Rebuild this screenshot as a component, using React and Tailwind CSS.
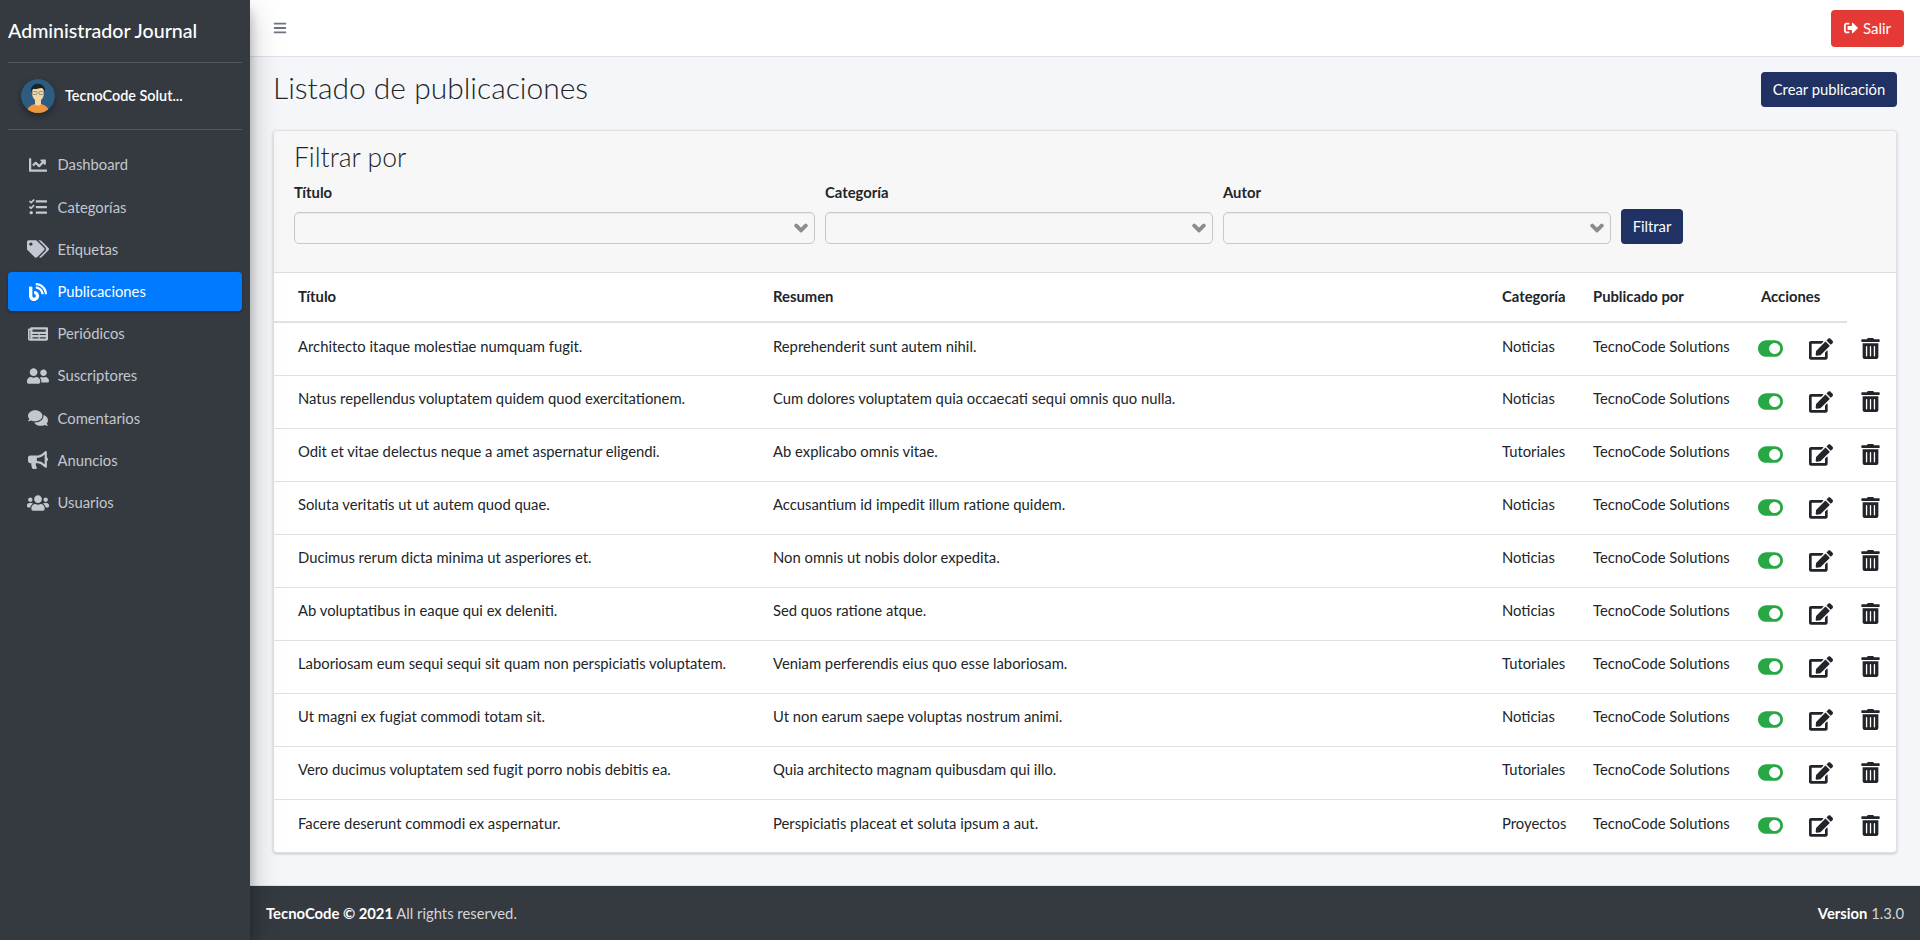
import { FaBars, FaBlog, FaBullhorn, FaChartLine, FaChevronDown, FaComments, FaEdit, FaNewspaper, FaSignOutAlt, FaTags, FaTasks, FaToggleOn, FaTrashAlt, FaUserFriends, FaUsers } from "react-icons/fa";

const menu = [
    { label: "Dashboard", icon: FaChartLine, size: "text-[18px]" },
    { label: "Categorías", icon: FaTasks, size: "text-[18px]" },
    { label: "Etiquetas", icon: FaTags, size: "text-[22px]" },
    { label: "Publicaciones", icon: FaBlog, size: "text-[18px]", active: true },
    { label: "Periódicos", icon: FaNewspaper, size: "text-[20px]" },
    { label: "Suscriptores", icon: FaUserFriends, size: "text-[22px]" },
    { label: "Comentarios", icon: FaComments, size: "text-[20px]" },
    { label: "Anuncios", icon: FaBullhorn, size: "text-[20px]" },
    { label: "Usuarios", icon: FaUsers, size: "text-[22px]" },
];

const posts = [
    ["Architecto itaque molestiae numquam fugit.", "Reprehenderit sunt autem nihil.", "Noticias"],
    ["Natus repellendus voluptatem quidem quod exercitationem.", "Cum dolores voluptatem quia occaecati sequi omnis quo nulla.", "Noticias"],
    ["Odit et vitae delectus neque a amet aspernatur eligendi.", "Ab explicabo omnis vitae.", "Tutoriales"],
    ["Soluta veritatis ut ut autem quod quae.", "Accusantium id impedit illum ratione quidem.", "Noticias"],
    ["Ducimus rerum dicta minima ut asperiores et.", "Non omnis ut nobis dolor expedita.", "Noticias"],
    ["Ab voluptatibus in eaque qui ex deleniti.", "Sed quos ratione atque.", "Noticias"],
    ["Laboriosam eum sequi sequi sit quam non perspiciatis voluptatem.", "Veniam perferendis eius quo esse laboriosam.", "Tutoriales"],
    ["Ut magni ex fugiat commodi totam sit.", "Ut non earum saepe voluptas nostrum animi.", "Noticias"],
    ["Vero ducimus voluptatem sed fugit porro nobis debitis ea.", "Quia architecto magnam quibusdam qui illo.", "Tutoriales"],
    ["Facere deserunt commodi ex aspernatur.", "Perspiciatis placeat et soluta ipsum a aut.", "Proyectos"],
];

const Avatar = () => (
    <svg viewBox="0 0 34 34" className="w-[34px] h-[34px] rounded-full shadow-[0_3px_6px_rgba(0,0,0,0.35)]">
        <circle cx="17" cy="17" r="17" fill="#2c5d80" />
        <path d="M6 34c0-6 4-8 8-9h6c4 1 8 3 8 9z" fill="#f0953f" />
        <path d="M14 20h6v5c0 2-6 2-6 0z" fill="#f3d6a4" />
        <ellipse cx="17" cy="14" rx="6" ry="8" fill="#f3d6a4" />
        <path d="M10 13c-1-6 4-9 8-8 4 0 7 4 6 8-1-2-2-4-4-4-3 1-7 1-8 1-1 1-1 2-2 3z" fill="#17242e" />
        <rect x="11.5" y="12.5" width="4.5" height="3" rx="1" fill="none" stroke="#6b7a6b" strokeWidth="0.7" />
        <rect x="18" y="12.5" width="4.5" height="3" rx="1" fill="none" stroke="#6b7a6b" strokeWidth="0.7" />
    </svg>
);

const FilterSelect = ({ label, width }) => (
    <div className={width}>
        <label className="block font-bold text-[14.8px] leading-[22px] mb-[9px] text-[#212529]">{label}</label>
        <div className="h-[32px] flex items-center justify-end pr-[6px] border border-[#c6c9cc] rounded-[5px] bg-[#f7f7f7] shadow-[inset_0_1px_1px_rgba(0,0,0,0.05)]">
            <FaChevronDown className="text-[#8d8d8d] text-[14px] stroke-current stroke-[60]" />
        </div>
    </div>
);

export default function App() {
    return (
        <div className="flex h-[940px] overflow-hidden bg-[#f4f6f9] text-[#212529] font-['Lato','Noto_Sans',sans-serif]">
            <aside className="w-[250px] shrink-0 bg-[#343a40] z-10 shadow-[0_14px_28px_rgba(0,0,0,0.25),0_10px_10px_rgba(0,0,0,0.22)] px-2">
                <div className="h-[63px] border-b border-[#4f5962] flex items-center text-white font-medium text-[19.6px]">Administrador Journal</div>
                <div className="h-[67px] border-b border-[#4f5962] flex items-center gap-[10px] pl-[13px]">
                    <Avatar />
                    <span className="text-white font-semibold text-[14.4px]">TecnoCode Solut...</span>
                </div>
                <nav className="pt-[15.5px] flex flex-col gap-[3.2px]">
                    {menu.map((item) => (
                        <a
                            key={item.label}
                            className={`h-[39px] flex items-center rounded-[4px] ${item.active ? "bg-[#007bff] text-white shadow-[0_1px_3px_rgba(0,0,0,0.3)]" : "text-[#c2c7d0]"}`}
                        >
                            <span className="w-[49.5px] pl-[10px] flex justify-center shrink-0">
                                <item.icon className={item.size} />
                            </span>
                            <span className="text-[14.8px] pb-[1px]">{item.label}</span>
                        </a>
                    ))}
                </nav>
            </aside>
            <div className="flex-1 flex flex-col min-w-0">
                <header className="h-[57px] shrink-0 bg-white border-b border-[#dee2e6] flex items-center justify-between pl-[23px] pr-4">
                    <FaBars className="text-[#6c757d] text-[14px]" />
                    <button className="h-[37px] w-[73px] bg-[#e53935] rounded-[4px] text-white text-[15px] flex items-center justify-center gap-[5px]">
                        <FaSignOutAlt className="text-[14px]" /> Salir
                    </button>
                </header>
                <main className="flex-1 px-[23px]">
                    <div className="flex items-center justify-between h-[73px] pb-[9px]">
                        <h1 className="text-[30px] font-light mb-[3px]">Listado de publicaciones</h1>
                        <button className="h-[35px] w-[136px] bg-[#1f3263] rounded-[4px] text-white text-[14.8px]">Crear publicación</button>
                    </div>
                    <section className="bg-white rounded-[4px] border border-[#dfe1e4] shadow-[0_1px_3px_rgba(0,0,0,0.2)]">
                        <div className="h-[142px] bg-[#f7f7f7] border-b border-[#dcdee0] px-5 pt-[8px] rounded-t-[4px]">
                            <h3 className="text-[26.5px] font-light leading-[36px] mb-[6px]">Filtrar por</h3>
                            <div className="flex items-end gap-[10px]">
                                <FilterSelect label="Título" width="w-[521px]" />
                                <FilterSelect label="Categoría" width="w-[388px]" />
                                <FilterSelect label="Autor" width="w-[388px]" />
                                <button className="h-[35px] w-[62px] bg-[#1f3263] rounded-[4px] text-white text-[14.8px]">Filtrar</button>
                            </div>
                        </div>
                        <table className="w-full table-fixed text-[14.8px]">
                            <colgroup>
                                <col className="w-[475px]" />
                                <col className="w-[729px]" />
                                <col className="w-[91px]" />
                                <col className="w-[167px]" />
                                <col className="w-[62px]" />
                                <col className="w-[49px]" />
                                <col />
                            </colgroup>
                            <thead>
                                <tr className="h-[49px] text-left">
                                    <th className="pl-6 pb-[2px] font-bold border-b-2 border-[#dee2e6]">Título</th>
                                    <th className="pl-6 pb-[2px] font-bold border-b-2 border-[#dee2e6]">Resumen</th>
                                    <th className="pl-6 pb-[2px] font-bold border-b-2 border-[#dee2e6]">Categoría</th>
                                    <th className="pl-6 pb-[2px] font-bold border-b-2 border-[#dee2e6]">Publicado por</th>
                                    <th colSpan={2} className="pl-[25px] pb-[2px] font-bold border-b-2 border-[#dee2e6]">Acciones</th>
                                    <th />
                                </tr>
                            </thead>
                            <tbody>
                                {posts.map((post) => (
                                    <tr key={post[0]} className="h-[53px] border-t border-[#dee2e6] first:border-t-0">
                                        <td className="pl-6 pb-[6px] whitespace-nowrap">{post[0]}</td>
                                        <td className="pl-6 pb-[6px] whitespace-nowrap">{post[1]}</td>
                                        <td className="pl-6 pb-[6px]">{post[2]}</td>
                                        <td className="pl-6 pb-[6px] whitespace-nowrap">TecnoCode Solutions</td>
                                        <td className="pl-[22px]"><FaToggleOn className="text-[#28a745] text-[25px]" /></td>
                                        <td className="pl-[11px]"><FaEdit className="text-[24px]" /></td>
                                        <td className="pl-[13px]"><FaTrashAlt className="text-[21px]" /></td>
                                    </tr>
                                ))}
                            </tbody>
                        </table>
                    </section>
                </main>
                <footer className="h-[55px] shrink-0 bg-[#343a40] border-t border-[#dee2e6] flex items-center justify-between px-4 text-[14.8px] text-[#d4d6d8]">
                    <span><strong className="text-white font-bold">TecnoCode © 2021</strong> All rights reserved.</span>
                    <span><strong className="text-white font-bold">Version</strong> 1.3.0</span>
                </footer>
            </div>
        </div>
    );
}
